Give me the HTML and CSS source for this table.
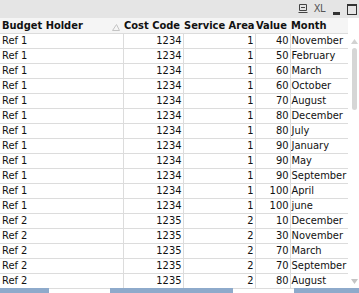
FILE: index.html
```html
<!DOCTYPE html>
<html>
<head>
<meta charset="utf-8">
<link rel="stylesheet" href="styles.css">
</head>
<body>
<div class="box">
  <div class="titlebar">
    <svg class="ico" width="10" height="10" viewBox="0 0 10 10"><path d="M1.5 0.5h7v6h-7z M0.5 8.5h9 M3 3.5h4" fill="none" stroke="#444" stroke-width="1"/></svg>
    <span class="xl">XL</span>
    <span class="min"></span>
    <span class="max"></span>
  </div>
  <div class="main">
    <table class="grid">
      <colgroup><col class="c1"><col class="c2"><col class="c3"><col class="c4"><col class="c5"></colgroup>
      <thead>
        <tr><th class="l sorted">Budget Holder<svg class="sort" width="8" height="7" viewBox="0 0 8 7"><path d="M0.5 6.5L4.5 0.5L7.5 6.5Z" fill="none" stroke="#c4c4c4"/></svg></th><th class="l">Cost Code</th><th class="l">Service Area</th><th class="l">Value</th><th class="l">Month</th></tr>
      </thead>
      <tbody>
        <tr><td>Ref 1</td><td class="n">1234</td><td class="n">1</td><td class="n">40</td><td>November</td></tr>
        <tr><td>Ref 1</td><td class="n">1234</td><td class="n">1</td><td class="n">50</td><td>February</td></tr>
        <tr><td>Ref 1</td><td class="n">1234</td><td class="n">1</td><td class="n">60</td><td>March</td></tr>
        <tr><td>Ref 1</td><td class="n">1234</td><td class="n">1</td><td class="n">60</td><td>October</td></tr>
        <tr><td>Ref 1</td><td class="n">1234</td><td class="n">1</td><td class="n">70</td><td>August</td></tr>
        <tr><td>Ref 1</td><td class="n">1234</td><td class="n">1</td><td class="n">80</td><td>December</td></tr>
        <tr><td>Ref 1</td><td class="n">1234</td><td class="n">1</td><td class="n">80</td><td>July</td></tr>
        <tr><td>Ref 1</td><td class="n">1234</td><td class="n">1</td><td class="n">90</td><td>January</td></tr>
        <tr><td>Ref 1</td><td class="n">1234</td><td class="n">1</td><td class="n">90</td><td>May</td></tr>
        <tr><td>Ref 1</td><td class="n">1234</td><td class="n">1</td><td class="n">90</td><td>September</td></tr>
        <tr><td>Ref 1</td><td class="n">1234</td><td class="n">1</td><td class="n">100</td><td>April</td></tr>
        <tr><td>Ref 1</td><td class="n">1234</td><td class="n">1</td><td class="n">100</td><td>june</td></tr>
        <tr><td>Ref 2</td><td class="n">1235</td><td class="n">2</td><td class="n">10</td><td>December</td></tr>
        <tr><td>Ref 2</td><td class="n">1235</td><td class="n">2</td><td class="n">30</td><td>November</td></tr>
        <tr><td>Ref 2</td><td class="n">1235</td><td class="n">2</td><td class="n">70</td><td>March</td></tr>
        <tr><td>Ref 2</td><td class="n">1235</td><td class="n">2</td><td class="n">70</td><td>September</td></tr>
        <tr><td>Ref 2</td><td class="n">1235</td><td class="n">2</td><td class="n">80</td><td>August</td></tr>
      </tbody>
    </table>
    <div class="vscroll">
      <div class="vhead"></div>
      <svg class="arrow" width="7" height="5" viewBox="0 0 7 5"><path d="M3.5 0L7 5H0Z" fill="#d2d2d2"/></svg>
      <div class="thumb"></div>
      <div class="spacer"></div>
      <svg class="arrow" width="7" height="5" viewBox="0 0 7 5"><path d="M0 0H7L3.5 5Z" fill="#c4c4c4"/></svg>
    </div>
  </div>
  <div class="hscroll">
    <span class="hb b1"></span><span class="hb b2"></span><span class="hb b3"></span>
  </div>
</div>
</body>
</html>
```
FILE: styles.css
```css
html, body { margin: 0; padding: 0; background: #fff; }
.box { width: 359px; height: 293px; overflow: hidden; font-family: "DejaVu Sans Condensed", "DejaVu Sans", sans-serif; color: #111; }
.titlebar { height: 18px; background: #e5e5e5; display: flex; align-items: center; justify-content: flex-end; padding-right: 2px; box-sizing: border-box; }
.ico { margin-right: 6px; }
.xl { font-family: "DejaVu Sans Condensed", sans-serif; font-size: 11px; color: #555; margin-right: 8px; letter-spacing: -0.5px; line-height: 18px; }
.min { width: 7px; height: 3px; background: #333; margin-top: 9px; margin-right: 7px; }
.max { width: 8px; height: 8px; border: 1px solid #333; border-top-width: 2px; }
.main { display: flex; height: 270px; }
.grid { border-collapse: collapse; table-layout: fixed; width: 348px; font-size: 11px; }
.c1 { width: 123px; } .c2 { width: 60px; } .c3 { width: 72px; } .c4 { width: 35px; } .c5 { width: 58px; }
th { height: 15px; padding: 0 0 0 1px; font-weight: bold; text-align: left; background: #f5f5f5; border-bottom: 1px solid #dcdcdc; white-space: nowrap; overflow: hidden; box-sizing: border-box; line-height: 15px; vertical-align: bottom; }
th.sorted { position: relative; padding-left: 2px; }
.sort { position: absolute; right: 3px; top: 6px; }
td { height: 15px; padding: 0 1px 0 2px; border-bottom: 1px solid #dcdcdc; border-right: 1px solid #dcdcdc; white-space: nowrap; overflow: hidden; box-sizing: border-box; line-height: 14px; vertical-align: bottom; }
td:last-child { border-right: none; padding-left: 1px; }
td.n { text-align: right; }
.vscroll { width: 11px; display: flex; flex-direction: column; align-items: center; }
.vhead { height: 21px; width: 11px; background: #fff; flex: none; }
.arrow { flex: none; margin-left: 1px; }
.thumb { width: 5px; height: 62px; background: #d6d6d6; border-radius: 3px; margin-top: 4px; margin-left: 2px; flex: none; }
.spacer { flex: 1; }
.vscroll .arrow:last-child { margin-bottom: 4px; }
.hscroll { height: 5px; display: flex; background: #fff; }
.hb { height: 5px; background: #8eaacb; flex: none; }
.b1 { width: 49px; }
.b2 { width: 123px; margin-left: 61px; }
.b3 { width: 65px; margin-left: 61px; }
```
